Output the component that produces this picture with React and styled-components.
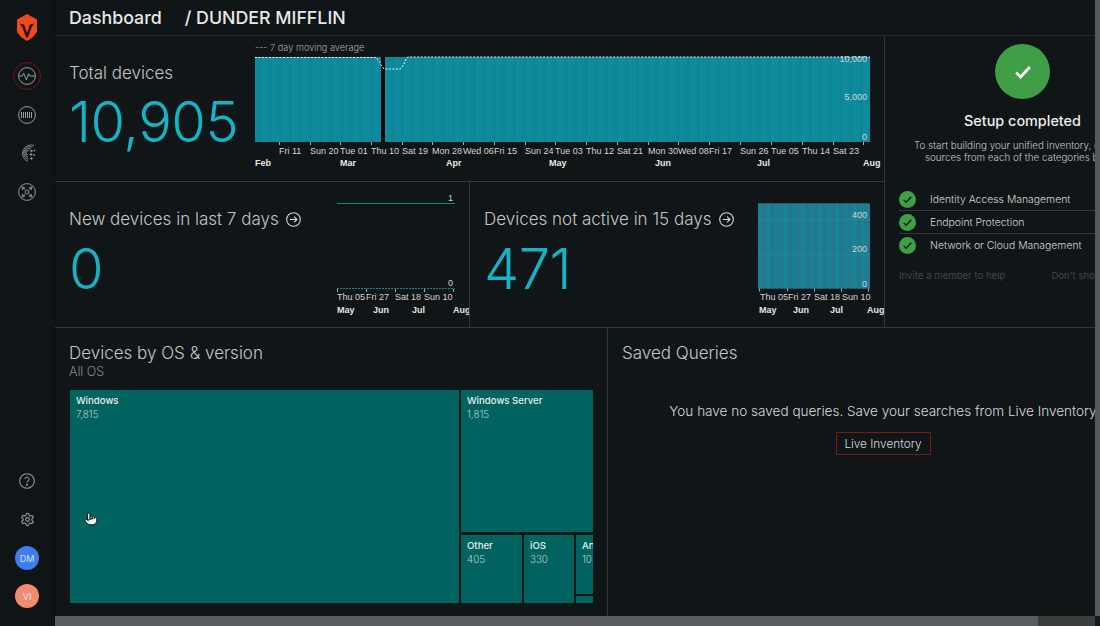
import React from 'react';
import styled, { createGlobalStyle } from 'styled-components';
import { Pointer } from 'lucide-react';

const FONT = '"Inter", "Liberation Sans", sans-serif';
const AXIS = '"Liberation Sans", Arial, sans-serif';

const GlobalStyle = createGlobalStyle`
  html, body {
    margin: 0;
    height: 100%;
    background: #101518;
    overflow: hidden;
  }
  #root {
    height: 100%;
  }
`;

const Page = styled.div`
  display: flex;
  width: 1100px;
  height: 626px;
  background: #101518;
  font-family: ${FONT};
  color: #ddd;
  overflow: hidden;
`;

const Sidebar = styled.nav`
  width: 55px;
  flex: none;
  background: #0f1417;
  border-right: 1px solid #0a0d0f;
  box-sizing: border-box;
  display: flex;
  flex-direction: column;
  align-items: center;
  padding: 14px 0 18px;
`;
const NavTop = styled.div`
  display: flex;
  flex-direction: column;
  align-items: center;
  gap: 12.7px;
  margin-top: 22px;
`;
const NavBottom = styled.div`
  margin-top: auto;
  display: flex;
  flex-direction: column;
  align-items: center;
  gap: 12px;
`;
const NavIcon = styled.div`
  width: 26px;
  height: 26px;
  display: flex;
  align-items: center;
  justify-content: center;
  color: #9a9d9f;
  border-radius: 50%;
  ${(p) => p.$active && 'outline: 1px solid #7a1318;'}
`;
const Avatar = styled.div`
  width: 24px;
  height: 24px;
  margin-top: 2px;
  border-radius: 50%;
  background: ${(p) => p.$bg};
  color: #d6e4f5;
  font-size: 9px;
  display: flex;
  align-items: center;
  justify-content: center;
`;

const Main = styled.div`
  flex: 1;
  min-width: 0;
  display: flex;
  flex-direction: column;
`;
const MainRow = styled.div`
  flex: 1;
  min-height: 0;
  display: flex;
`;
const Column = styled.div`
  flex: 1;
  min-width: 0;
  display: flex;
  flex-direction: column;
`;
const Header = styled.header`
  height: 35px;
  flex: none;
  display: flex;
  align-items: center;
  padding-left: 14px;
  border-bottom: 1px solid #24282a;
  font-size: 17.8px;
  font-weight: 500;
  color: #e8e8e8;
`;
const Crumb = styled.span`
  margin-left: 23px;
`;
const Content = styled.div`
  flex: 1;
  min-height: 0;
  display: flex;
  flex-direction: column;
  overflow: hidden;
`;
const ScrollY = styled.div`
  width: 5px;
  flex: none;
  background: #55585b;
`;
const ScrollX = styled.div`
  height: 10px;
  flex: none;
  display: flex;
  background: #3c3d3d;
`;
const ScrollThumb = styled.div`
  flex: 1;
  background: #5a5d60;
`;
const ScrollTrack = styled.div`
  width: 57px;
  flex: none;
`;
const ScrollCorner = styled.div`
  width: 5px;
  flex: none;
  background: #15191b;
`;

const TopArea = styled.div`
  height: 292px;
  flex: none;
  display: flex;
  border-bottom: 1px solid #34373a;
  box-sizing: border-box;
`;
const LeftStack = styled.div`
  width: 830px;
  flex: none;
  display: flex;
  flex-direction: column;
  border-right: 1px solid #34373a;
  box-sizing: border-box;
`;
const TotalRow = styled.section`
  height: 146px;
  flex: none;
  box-sizing: border-box;
  border-bottom: 1px solid #34373a;
  display: flex;
  padding-left: 14px;
`;
const TotalInfo = styled.div`
  width: 185px;
  flex: none;
  padding-top: 27px;
`;
const MiniRow = styled.div`
  flex: 1;
  min-height: 0;
  display: flex;
`;
const MiniCard = styled.section`
  width: ${(p) => p.$w}px;
  flex: none;
  box-sizing: border-box;
  display: flex;
  padding-left: 14px;
  ${(p) => p.$divider && 'border-right: 1px solid #34373a;'}
`;
const MiniInfo = styled.div`
  flex: 1;
  min-width: 0;
  padding-top: 27px;
`;
const CardTitle = styled.h2`
  margin: 0;
  font-size: 17px;
  line-height: 20px;
  font-weight: 300;
  color: #c4c6c7;
  display: flex;
  align-items: center;
  gap: 7px;
  white-space: nowrap;
`;
const BigNumber = styled.div`
  font-size: 56px;
  line-height: 64px;
  font-weight: 300;
  color: #14b4c6;
  margin-top: ${(p) => p.$top}px;
  letter-spacing: -0.5px;
`;
const ChartSvg = styled.svg`
  display: block;
  flex: none;
  font-family: ${AXIS};
`;

const SetupPanel = styled.aside`
  flex: 1;
  min-width: 0;
  overflow: hidden;
`;
const SetupInner = styled.div`
  width: 275px;
  box-sizing: border-box;
  padding-top: 8px;
  display: flex;
  flex-direction: column;
  align-items: center;
`;
const SetupBadge = styled.div`
  width: 55px;
  height: 55px;
  border-radius: 50%;
  background: #3f9e46;
  display: flex;
  align-items: center;
  justify-content: center;
`;
const SetupTitle = styled.div`
  font-size: 14.4px;
  font-weight: 500;
  color: #eee;
  margin-top: 13px;
  line-height: 18px;
`;
const SetupText = styled.p`
  margin: 10px 0 0;
  width: 275px;
  text-align: center;
  font-size: 9.8px;
  line-height: 11.5px;
  font-weight: 300;
  color: #c8c9ca;
  white-space: nowrap;
`;
const CheckList = styled.ul`
  list-style: none;
  margin: 25px 0 0;
  padding: 0 0 0 14px;
  width: 100%;
  box-sizing: border-box;
`;
const CheckItem = styled.li`
  height: 23px;
  display: flex;
  align-items: center;
  gap: 14px;
  font-size: 10.4px;
  font-weight: 300;
  color: #d4d5d6;
  box-sizing: border-box;
  border-bottom: 1px solid #34373a;
  &:last-child {
    border-bottom-color: transparent;
  }
`;
const CheckDot = styled.span`
  width: 17px;
  height: 17px;
  border-radius: 50%;
  background: #3f9e46;
  flex: none;
  display: flex;
  align-items: center;
  justify-content: center;
`;
const SetupLinks = styled.div`
  width: 100%;
  box-sizing: border-box;
  padding-left: 14px;
  margin-top: 13px;
  display: flex;
  gap: 46px;
  font-size: 9.6px;
  color: #44484a;
  white-space: nowrap;
`;

const BottomRow = styled.div`
  flex: 1;
  min-height: 0;
  display: flex;
`;
const OsCard = styled.section`
  width: 553px;
  flex: none;
  box-sizing: border-box;
  border-right: 1px solid #34373a;
  padding: 15px 14px 13px 14px;
  display: flex;
  flex-direction: column;
  position: relative;
`;
const SubTitle = styled.div`
  font-size: 12.5px;
  line-height: 16px;
  font-weight: 300;
  color: #85888a;
  margin-top: 1px;
`;
const TreeMap = styled.div`
  margin: 10px 0 0 1px;
  flex: 1;
  min-height: 0;
  display: flex;
  gap: 2px;
  overflow: hidden;
`;
const TreeColumn = styled.div`
  display: flex;
  flex-direction: column;
  gap: ${(p) => p.$gap || 3}px;
  flex: 1;
  min-width: 0;
  min-height: 0;
`;
const TreeRow = styled.div`
  display: flex;
  gap: 2px;
  height: ${(p) => p.$h}px;
  flex: none;
`;
const Tile = styled.div`
  background: #00635f;
  box-sizing: border-box;
  padding: 4px 6px;
  width: ${(p) => (p.$w ? `${p.$w}px` : 'auto')};
  height: ${(p) => (p.$h ? `${p.$h}px` : 'auto')};
  flex: ${(p) => (p.$w || p.$h ? 'none' : 1)};
  overflow: hidden;
  white-space: nowrap;
`;
const TileName = styled.div`
  font-size: 9.6px;
  line-height: 13px;
  font-weight: 500;
  color: #e6efee;
`;
const TileValue = styled.div`
  font-size: 9.8px;
  line-height: 14px;
  font-weight: 300;
  color: #b4cfcd;
  margin-top: 1px;
`;
const CursorMark = styled.div`
  position: absolute;
  left: 29px;
  top: 182px;
  color: #111;
`;
const QueriesCard = styled.section`
  flex: none;
  width: 550px;
  box-sizing: border-box;
  padding: 15px 14px 0;
  display: flex;
  flex-direction: column;
`;
const EmptyState = styled.div`
  display: flex;
  flex-direction: column;
  align-items: center;
  margin-top: 39px;
`;
const EmptyText = styled.div`
  font-size: 13.55px;
  line-height: 18px;
  font-weight: 300;
  color: #d8d9da;
  white-space: nowrap;
`;
const OutlineButton = styled.button`
  margin-top: 12px;
  width: 95px;
  height: 23px;
  background: transparent;
  border: 1px solid #7d1519;
  color: #d8d9da;
  font-family: ${FONT};
  font-size: 11.8px;
  font-weight: 300;
  padding: 0;
`;

const ArrowCircle = () => (
  <svg width="15" height="15" viewBox="0 0 15 15" fill="none" stroke="#d5d6d7" strokeWidth="1.1">
    <circle cx="7.5" cy="7.5" r="6.8" />
    <path d="M3.8 7.5h7.2M8 4.6l3 2.9-3 2.9" />
  </svg>
);

const Logo = () => (
  <svg width="22" height="27" viewBox="0 0 22 27">
    <path fill="#f0491b" d="M11 0L21 5.5V18L17 23L11 27L5 23L1 18V5.5Z" />
    <path fill="#2a0f08" d="M3.5 9.5L8 10.5L11 19L14 10.5L18.5 9.5L15.5 13.5L12 23.5H10L6.5 13.5Z" />
    <path fill="#f0491b" d="M8.8 10.5H13.2L11 16.5Z" />
  </svg>
);

const PulseIcon = () => (
  <svg width="18" height="18" viewBox="0 0 18 18" fill="none" stroke="currentColor" strokeWidth="1">
    <circle cx="9" cy="9" r="8.4" />
    <path d="M1 9h3.2l1.5-2.8 2.7 6.6 2.2-6.2 1.3 2.4h5.1" />
  </svg>
);
const BarcodeIcon = () => (
  <svg width="18" height="18" viewBox="0 0 18 18" fill="none" stroke="currentColor">
    <circle cx="9" cy="9" r="8.4" strokeWidth="1" />
    <path d="M3.5 6v6M5.5 6v6M7.5 6v6M9.5 6v6M11.5 6v6M13.5 6v6" strokeWidth="1" />
  </svg>
);
const RadarIcon = () => (
  <svg width="18" height="18" viewBox="0 0 18 18" fill="none" stroke="currentColor" strokeWidth="0.8">
    <path d="M16 1.5A8.4 8.4 0 1 0 10 17.4" />
    <path d="M14.4 3.1A6.3 6.3 0 1 0 10 15.3" />
    <path d="M12.8 4.7A4.2 4.2 0 1 0 10 13.2" />
    <path d="M11.2 6.3A2.2 2.2 0 1 0 10 11.2" />
    <circle cx="13.5" cy="7" r="0.8" fill="currentColor" />
    <circle cx="16.5" cy="6.5" r="0.6" fill="currentColor" />
    <circle cx="13" cy="10.5" r="0.8" fill="currentColor" />
    <circle cx="16" cy="11" r="0.6" fill="currentColor" />
    <circle cx="13.5" cy="14.5" r="0.8" fill="currentColor" />
  </svg>
);
const HubIcon = () => (
  <svg width="18" height="18" viewBox="0 0 18 18" fill="none" stroke="currentColor" strokeWidth="0.9">
    <circle cx="9" cy="9" r="8.4" />
    <circle cx="9" cy="9" r="2" />
    <path d="M3.8 3.8l3 1-2 2zM14.2 3.8l-3 1 2 2zM3.8 14.2l3-1-2-2zM14.2 14.2l-3-1 2-2z" />
    <path d="M5.5 5.5l1 1M12.5 5.5l-1 1M5.5 12.5l1-1M12.5 12.5l-1-1" />
  </svg>
);
const HelpIcon = () => (
  <svg width="16" height="16" viewBox="0 0 17 17" fill="none" stroke="currentColor" strokeWidth="1.1">
    <circle cx="8.5" cy="8.5" r="7.8" />
    <path d="M6.3 6.5a2.2 2.2 0 1 1 3.4 1.9c-.8.5-1.2 1-1.2 1.9" />
    <circle cx="8.5" cy="12.5" r="0.5" fill="currentColor" />
  </svg>
);
const GearIcon = () => (
  <svg width="15" height="15" viewBox="0 0 24 24" fill="none" stroke="currentColor" strokeWidth="1.8" strokeLinecap="round" strokeLinejoin="round">
    <path d="M12.22 2h-.44a2 2 0 0 0-2 2v.18a2 2 0 0 1-1 1.73l-.43.25a2 2 0 0 1-2 0l-.15-.08a2 2 0 0 0-2.73.73l-.22.38a2 2 0 0 0 .73 2.73l.15.1a2 2 0 0 1 1 1.72v.51a2 2 0 0 1-1 1.74l-.15.09a2 2 0 0 0-.73 2.73l.22.38a2 2 0 0 0 2.73.73l.15-.08a2 2 0 0 1 2 0l.43.25a2 2 0 0 1 1 1.73V20a2 2 0 0 0 2 2h.44a2 2 0 0 0 2-2v-.18a2 2 0 0 1 1-1.73l.43-.25a2 2 0 0 1 2 0l.15.08a2 2 0 0 0 2.73-.73l.22-.39a2 2 0 0 0-.73-2.73l-.15-.08a2 2 0 0 1-1-1.74v-.5a2 2 0 0 1 1-1.74l.15-.09a2 2 0 0 0 .73-2.73l-.22-.38a2 2 0 0 0-2.73-.73l-.15.08a2 2 0 0 1-2 0l-.43-.25a2 2 0 0 1-1-1.73V4a2 2 0 0 0-2-2z" />
    <circle cx="12" cy="12" r="3" />
  </svg>
);

const Check = ({ size, stroke, color }) => (
  <svg width={size} height={size} viewBox="0 0 16 16" fill="none" stroke={color} strokeWidth={stroke}>
    <path d="M2.5 8.5l3.5 3.5 7.5-8" />
  </svg>
);

// striped bars, one rect per day, on a base so the seams stay teal
const Bars = ({ x, y, w, h, pitch, colors }) => {
  const out = [<rect key="base" x={x} y={y} width={w} height={h} fill={colors[0]} />];
  const n = Math.ceil(w / pitch);
  for (let i = 0; i < n; i++) {
    const bx = x + i * pitch;
    out.push(
      <rect key={i} x={bx} y={y} width={Math.min(pitch - 0.6, x + w - bx)} height={h} fill={colors[i % colors.length]} />
    );
  }
  return out;
};

const Ticks = ({ xs, y }) =>
  xs.map((tx) => <line key={tx} x1={tx + 0.5} x2={tx + 0.5} y1={y} y2={y + 3} stroke="#aaa" strokeWidth="1" />);

const AxisText = ({ x, y, children, bold, anchor }) => (
  <text x={x} y={y} fontSize="9" fontWeight={bold ? 700 : 400} fill={bold ? '#e6e6e6' : '#d4d4d4'} textAnchor={anchor || 'start'}>
    {children}
  </text>
);

const TOP_DAYS = [
  ['Fri 11', 279], ['Sun 20', 310], ['Tue 01', 340], ['Thu 10', 371], ['Sat 19', 402], ['Mon 28', 432],
  ['Wed 06', 463], ['Fri 15', 494], ['Sun 24', 525], ['Tue 03', 555], ['Thu 12', 586], ['Sat 21', 617],
  ['Mon 30', 648], ['Wed 08', 678], ['Fri 17', 709], ['Sun 26', 740], ['Tue 05', 771], ['Thu 14', 802], ['Sat 23', 833],
];
const TOP_MONTHS = [['Feb', 255], ['Mar', 340], ['Apr', 446], ['May', 549], ['Jun', 655], ['Jul', 757], ['Aug', 863]];

const TotalChart = () => (
  <ChartSvg width="630" height="145" viewBox="254 36 630 145">
    <text x="255" y="50.5" fontSize="9.2" fill="#a9abac" fontFamily={FONT} fontWeight="300">--- 7 day moving average</text>
    <Bars x={255} y={57} w={615} h={85} pitch={3.4} colors={['#0e8a9c', '#0f8596', '#0d8ea0']} />
    <rect x="381" y="57" width="4" height="85" fill="#050708" />
    <path d="M255 57.5H376.5l3 5 3.5 5.5 2 1h15l2-1.5 3-6 1.7-3.5 1.3-1H870" fill="none" stroke="#eef2f2" strokeWidth="1" strokeDasharray="2 1.5" />
    <Ticks y={142} xs={[279, 310, 340, 371, 402, 432, 463, 494, 525, 555, 586, 617, 648, 678, 709, 740, 771, 802, 833, 863]} />
    {TOP_DAYS.map(([t, x]) => (
      <AxisText key={t} x={x} y={153.5}>{t}</AxisText>
    ))}
    {TOP_MONTHS.map(([t, x]) => (
      <AxisText key={t} x={x} y={166} bold>{t}</AxisText>
    ))}
    <AxisText x={867} y={61.5} anchor="end">10,000</AxisText>
    <AxisText x={867} y={100} anchor="end">5,000</AxisText>
    <AxisText x={867} y={140} anchor="end">0</AxisText>
  </ChartSvg>
);

const MiniAxis = ({ x0, labels, months }) => (
  <>
    {labels.map(([t, x]) => (
      <AxisText key={t} x={x - x0} y={118}>{t}</AxisText>
    ))}
    {months.map(([t, x]) => (
      <AxisText key={t} x={x - x0} y={131} bold>{t}</AxisText>
    ))}
  </>
);

const NewDevicesChart = () => (
  <ChartSvg width="132" height="145">
    <line x1="0" x2="118" y1="21.5" y2="21.5" stroke="#0e8a8e" />
    <line x1="0" x2="118" y1="106.5" y2="106.5" stroke="#0e8a8e" strokeDasharray="2 1" />
    <Ticks y={107} xs={[0, 29, 58, 87, 116]} />
    <AxisText x={116} y={19} anchor="end">1</AxisText>
    <AxisText x={116} y={104} anchor="end">0</AxisText>
    <MiniAxis
      x0={337}
      labels={[['Thu 05', 337], ['Fri 27', 366], ['Sat 18', 395], ['Sun 10', 424]]}
      months={[['May', 337], ['Jun', 373], ['Jul', 412], ['Aug', 453]]}
    />
  </ChartSvg>
);

const InactiveChart = () => (
  <ChartSvg width="126" height="145">
    <Bars x={0} y={21.5} w={112} h={85} pitch={4.3} colors={['#1d7f94', '#237a8e', '#1a8498', '#25768a']} />
    <line x1="0" x2="112" y1="37.5" y2="37.5" stroke="#17919f" strokeWidth="0.7" />
    <line x1="0" x2="112" y1="72.5" y2="72.5" stroke="#17919f" strokeWidth="0.7" />
    <Ticks y={106.5} xs={[1, 29, 56, 83, 110]} />
    <AxisText x={109} y={35.5} anchor="end">400</AxisText>
    <AxisText x={109} y={70} anchor="end">200</AxisText>
    <AxisText x={109} y={104.5} anchor="end">0</AxisText>
    <MiniAxis
      x0={758}
      labels={[['Thu 05', 760], ['Fri 27', 788], ['Sat 18', 814], ['Sun 10', 842]]}
      months={[['May', 759], ['Jun', 793], ['Jul', 830], ['Aug', 867]]}
    />
  </ChartSvg>
);

const SETUP_ITEMS = ['Identity Access Management', 'Endpoint Protection', 'Network or Cloud Management'];

export default function App() {
  return (
    <Page>
      <GlobalStyle />
      <Sidebar>
        <Logo />
        <NavTop>
          <NavIcon $active><PulseIcon /></NavIcon>
          <NavIcon><BarcodeIcon /></NavIcon>
          <NavIcon><RadarIcon /></NavIcon>
          <NavIcon><HubIcon /></NavIcon>
        </NavTop>
        <NavBottom>
          <NavIcon><HelpIcon /></NavIcon>
          <NavIcon><GearIcon /></NavIcon>
          <Avatar $bg="#3f7cf0">DM</Avatar>
          <Avatar $bg="#f08a70">VI</Avatar>
        </NavBottom>
      </Sidebar>
      <Main>
        <MainRow>
          <Column>
            <Header>
              Dashboard
              <Crumb>/ DUNDER MIFFLIN</Crumb>
            </Header>
            <Content>
              <TopArea>
                <LeftStack>
                  <TotalRow>
                    <TotalInfo>
                      <CardTitle>Total devices</CardTitle>
                      <BigNumber $top={7}>10,905</BigNumber>
                    </TotalInfo>
                    <TotalChart />
                  </TotalRow>
                  <MiniRow>
                    <MiniCard $w={415} $divider>
                      <MiniInfo>
                        <CardTitle>New devices in last 7 days <ArrowCircle /></CardTitle>
                        <BigNumber $top={8}>0</BigNumber>
                      </MiniInfo>
                      <NewDevicesChart />
                    </MiniCard>
                    <MiniCard $w={414}>
                      <MiniInfo>
                        <CardTitle>Devices not active in 15 days <ArrowCircle /></CardTitle>
                        <BigNumber $top={8}>471</BigNumber>
                      </MiniInfo>
                      <InactiveChart />
                    </MiniCard>
                  </MiniRow>
                </LeftStack>
                <SetupPanel>
                  <SetupInner>
                    <SetupBadge><Check size={20} stroke={2.2} color="#fff" /></SetupBadge>
                    <SetupTitle>Setup completed</SetupTitle>
                    <SetupText>
                      To start building your unified inventory, connect
                      <br />
                      sources from each of the categories below
                    </SetupText>
                    <CheckList>
                      {SETUP_ITEMS.map((item) => (
                        <CheckItem key={item}>
                          <CheckDot><Check size={11} stroke={1.8} color="#10181a" /></CheckDot>
                          {item}
                        </CheckItem>
                      ))}
                    </CheckList>
                    <SetupLinks>
                      <span>Invite a member to help</span>
                      <span>Don't show again</span>
                    </SetupLinks>
                  </SetupInner>
                </SetupPanel>
              </TopArea>
              <BottomRow>
                <OsCard>
                  <CardTitle>Devices by OS &amp; version</CardTitle>
                  <SubTitle>All OS</SubTitle>
                  <TreeMap>
                    <Tile $w={389}>
                      <TileName>Windows</TileName>
                      <TileValue>7,815</TileValue>
                    </Tile>
                    <TreeColumn>
                      <Tile $h={142}>
                        <TileName>Windows Server</TileName>
                        <TileValue>1,815</TileValue>
                      </Tile>
                      <TreeRow $h={68}>
                        <Tile $w={61}>
                          <TileName>Other</TileName>
                          <TileValue>405</TileValue>
                        </Tile>
                        <Tile $w={50}>
                          <TileName>iOS</TileName>
                          <TileValue>330</TileValue>
                        </Tile>
                        <TreeColumn $gap={2}>
                          <Tile $h={59}>
                            <TileName>Android</TileName>
                            <TileValue>105</TileValue>
                          </Tile>
                          <Tile />
                        </TreeColumn>
                      </TreeRow>
                    </TreeColumn>
                  </TreeMap>
                  <CursorMark>
                    <Pointer size={14} fill="#f2f2f2" strokeWidth={1.6} />
                  </CursorMark>
                </OsCard>
                <QueriesCard>
                  <CardTitle>Saved Queries</CardTitle>
                  <EmptyState>
                    <EmptyText>You have no saved queries. Save your searches from Live Inventory</EmptyText>
                    <OutlineButton>Live Inventory</OutlineButton>
                  </EmptyState>
                </QueriesCard>
              </BottomRow>
            </Content>
          </Column>
          <ScrollY />
        </MainRow>
        <ScrollX>
          <ScrollThumb />
          <ScrollTrack />
          <ScrollCorner />
        </ScrollX>
      </Main>
    </Page>
  );
}
